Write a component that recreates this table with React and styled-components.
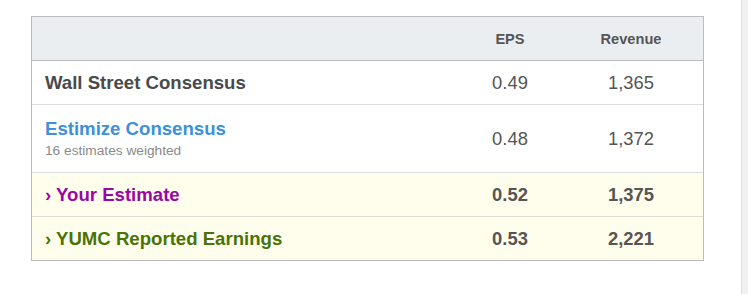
import React from "react";
import styled, { createGlobalStyle } from "styled-components";

const Global = createGlobalStyle`
  html, body { margin: 0; padding: 0; background: #fff; }
  body { font-family: "Liberation Sans", Arial, sans-serif; }
`;

const Page = styled.div`
  display: flex;
  width: 748px;
  height: 294px;
  box-sizing: border-box;
`;

const Main = styled.div`
  flex: 1;
  padding: 16px 37px 0 31px;
`;

const Scrollbar = styled.div`
  width: 6px;
  border-left: 1px solid #dcdcdc;
  background: #f1f1f1;
`;

const Table = styled.div`
  border: 1px solid #bbbbbb;
  display: flex;
  flex-direction: column;
`;

const Row = styled.div`
  display: grid;
  grid-template-columns: 1fr 98px 144px;
  align-items: center;
  height: ${(p) => p.$h}px;
  box-sizing: border-box;
  background: ${(p) => p.$bg || "#fff"};
  border-top: ${(p) => (p.$first ? "none" : p.$strong ? "1px solid #bbbbbb" : "1px solid #dddddd")};
`;

const HeadCell = styled.div`
  text-align: center;
  font-size: 14.6px;
  font-weight: bold;
  color: #555;
`;

const NameCell = styled.div`
  padding-left: 13px;
  display: flex;
  flex-direction: column;
  gap: 3px;
  margin-top: ${(p) => (p.$sub ? "-2px" : "0")};
`;

const Name = styled.div`
  font-size: 18.6px;
  font-weight: bold;
  color: ${(p) => p.$color};
`;

const Sub = styled.div`
  font-size: 13.7px;
  color: #8a8a8a;
`;

const Num = styled.div`
  text-align: center;
  font-size: 18.4px;
  font-weight: ${(p) => (p.$bold ? "bold" : "normal")};
  color: #555;
`;

const rows = [
  { name: "Wall Street Consensus", color: "#4a4a4a", eps: "0.49", rev: "1,365", h: 44 },
  { name: "Estimize Consensus", sub: "16 estimates weighted", color: "#3d8fdf", eps: "0.48", rev: "1,372", h: 68 },
  { name: "› Your Estimate", color: "#9b06a8", eps: "0.52", rev: "1,375", h: 44, bold: true, bg: "#fffdec" },
  { name: "› YUMC Reported Earnings", color: "#4a7306", eps: "0.53", rev: "2,221", h: 44, bold: true, bg: "#fffdec" },
];

export default function App() {
  return (
    <>
      <Global />
      <Page>
        <Main>
          <Table>
            <Row $first $h={43} $bg="#eaeef1">
              <div />
              <HeadCell>EPS</HeadCell>
              <HeadCell>Revenue</HeadCell>
            </Row>
            {rows.map((r, i) => (
              <Row key={r.name} $h={r.h} $bg={r.bg} $strong={i === 0}>
                <NameCell $sub={!!r.sub}>
                  <Name $color={r.color}>{r.name}</Name>
                  {r.sub && <Sub>{r.sub}</Sub>}
                </NameCell>
                <Num $bold={r.bold}>{r.eps}</Num>
                <Num $bold={r.bold}>{r.rev}</Num>
              </Row>
            ))}
          </Table>
        </Main>
        <Scrollbar />
      </Page>
    </>
  );
}
